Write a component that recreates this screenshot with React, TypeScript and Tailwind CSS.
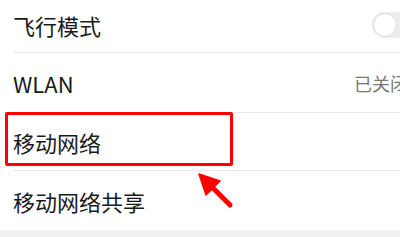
import React from 'react';

type Row = {
  label: string
  right?: 'toggle' | 'text'
  value?: string
  height: string
  last?: boolean
}

const rows: Row[] = [
  { label: '飞行模式', right: 'toggle', height: 'h-[53px] pb-[3px]' },
  { label: 'WLAN', right: 'text', value: '已关闭', height: 'h-[60px]' },
  { label: '移动网络', height: 'h-[58px]' },
  { label: '移动网络共享', height: 'h-[59px]', last: true },
];

const Toggle = () => (
  <div className="shrink-0 mr-[-22px] w-[50px] h-[26px] rounded-full bg-[#ededed] flex items-center pl-[1px]">
    <div className="w-[24px] h-[24px] rounded-full bg-white border border-[#dcdcdc]" />
  </div>
);

const App: React.FC = () => {
  return (
    <div
      className="relative w-[400px] h-[237px] overflow-hidden bg-[#f1f1f1]"
      style={{ fontFamily: '"Noto Sans CJK SC", "Noto Sans", sans-serif' }}
    >
      <div className="bg-white">
        {rows.map((row) => (
          <div key={row.label} className="pl-[13px]">
            <div
              className={`${row.height} flex items-center justify-between ${
                row.last ? '' : 'border-b border-[#e9e9e9]'
              }`}
            >
              <span className="text-[22px] leading-none text-[#1a1a1a] whitespace-nowrap">
                {row.label}
              </span>
              {row.right === 'toggle' && <Toggle />}
              {row.right === 'text' && (
                <span className="shrink-0 mr-[-8px] text-[18px] leading-none text-[#777777] whitespace-nowrap">
                  {row.value}
                </span>
              )}
            </div>
          </div>
        ))}
      </div>

      {/* highlight box */}
      <div className="absolute left-[5px] top-[112px] w-[228px] h-[54px] border-[3.5px] border-[#ff0000] rounded-[2px]" />

      {/* arrow */}
      <svg className="absolute left-0 top-0" width="400" height="237" viewBox="0 0 400 237">
        <line x1="230" y1="205" x2="208" y2="183" stroke="#ff0000" strokeWidth="5" strokeLinecap="round" />
        <polygon points="199,174 220,181 206,195" fill="#ff0000" stroke="#ff0000" strokeWidth="1.5" strokeLinejoin="round" />
      </svg>
    </div>
  );
};

export default App;
